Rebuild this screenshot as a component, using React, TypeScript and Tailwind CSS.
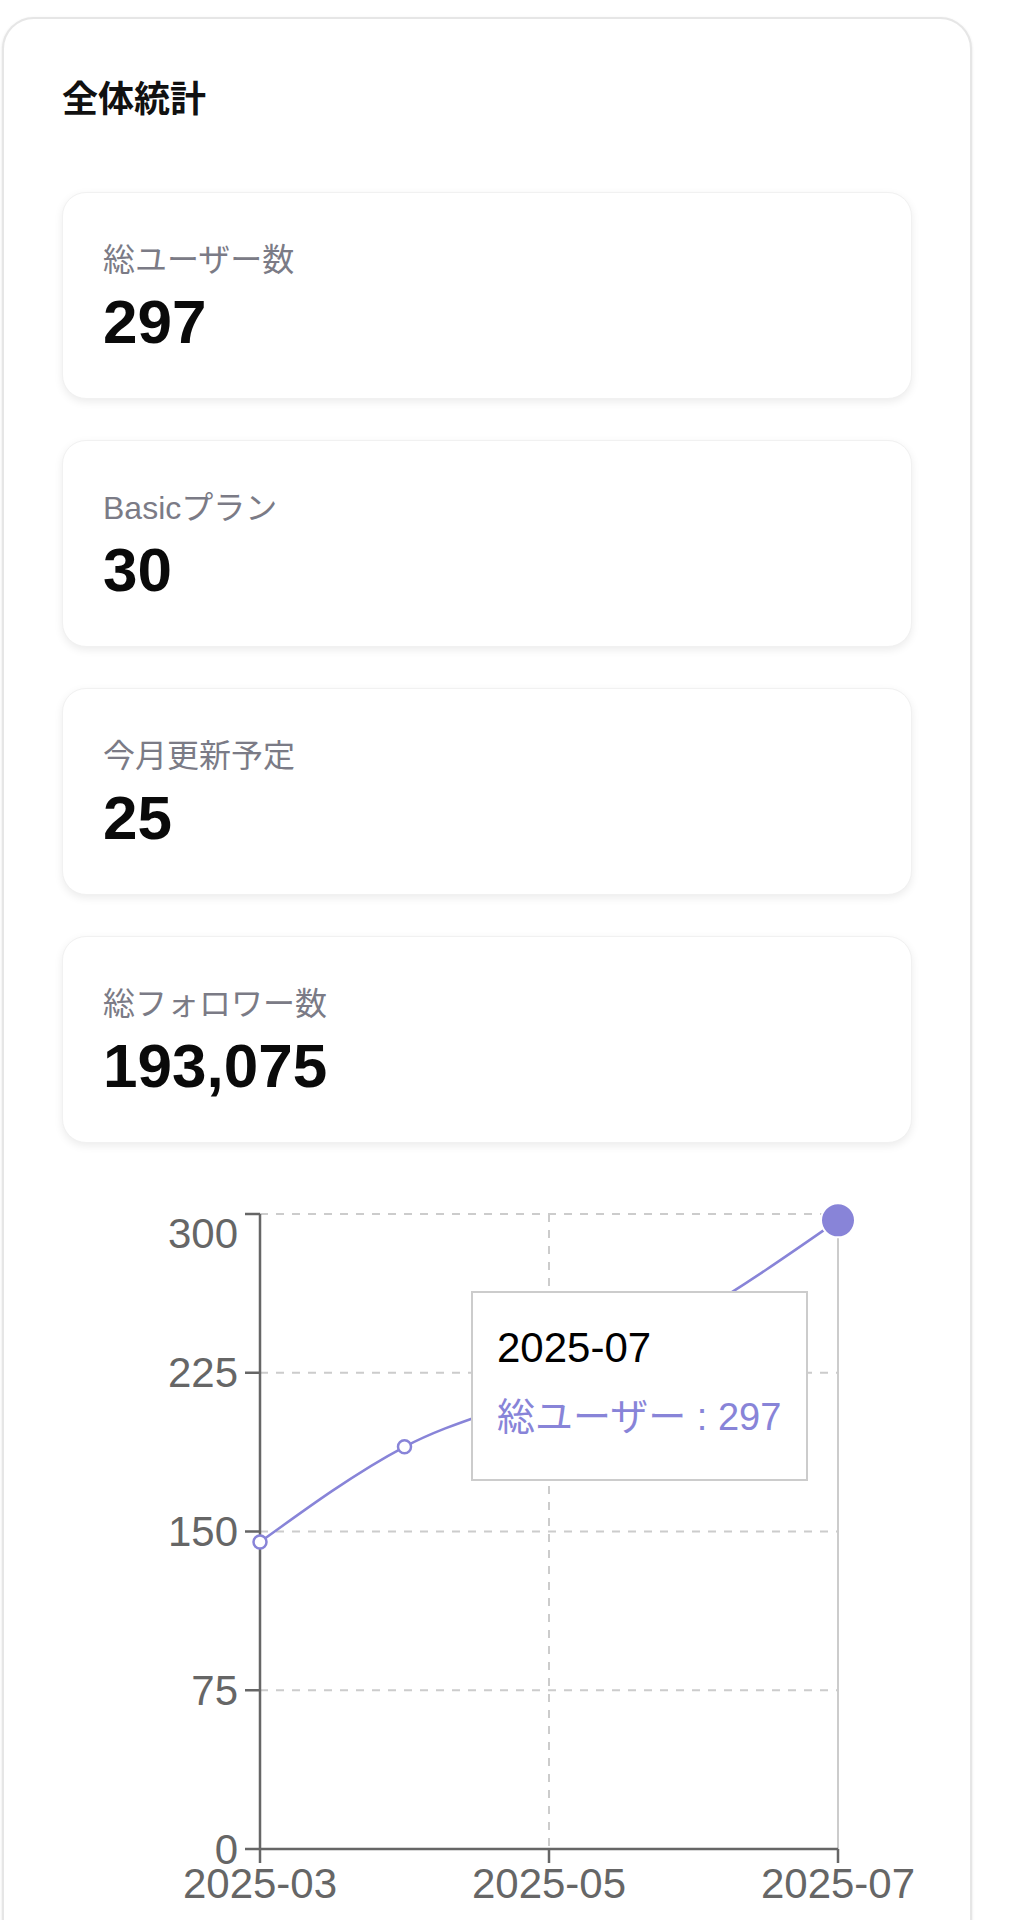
const stats = [
  { label: "総ユーザー数", value: "297" },
  { label: "Basicプラン", value: "30" },
  { label: "今月更新予定", value: "25" },
  { label: "総フォロワー数", value: "193,075" },
];

const data = [
  { month: "2025-03", users: 145 },
  { month: "2025-04", users: 190 },
  { month: "2025-05", users: 217 },
  { month: "2025-06", users: 252 },
  { month: "2025-07", users: 297 },
];

// plot area, in page pixels (svg viewBox is offset to match)
const X0 = 260;
const STEP = 144.5;
const Y0 = 1849;
const YTOP = 1214;
const X_END = X0 + STEP * 4;

const px = (i: number) => X0 + i * STEP;
const py = (v: number) => Y0 - (v * (Y0 - YTOP)) / 300;

// monotone-x curve, same idea as d3 curveMonotoneX
function monotonePath(pts: { x: number; y: number }[]) {
  const n = pts.length;
  const sec: number[] = [];
  for (let i = 0; i < n - 1; i++) {
    sec.push((pts[i + 1].y - pts[i].y) / (pts[i + 1].x - pts[i].x));
  }
  const t: number[] = new Array(n).fill(0);
  for (let i = 1; i < n - 1; i++) {
    const s0 = sec[i - 1];
    const s1 = sec[i];
    const p = (s0 + s1) / 2;
    t[i] = (Math.sign(s0) + Math.sign(s1)) * Math.min(Math.abs(s0), Math.abs(s1), 0.5 * Math.abs(p));
  }
  t[0] = (3 * sec[0] - t[1]) / 2;
  t[n - 1] = (3 * sec[n - 2] - t[n - 2]) / 2;

  let d = `M${pts[0].x},${pts[0].y}`;
  for (let i = 0; i < n - 1; i++) {
    const dx = (pts[i + 1].x - pts[i].x) / 3;
    d += ` C${pts[i].x + dx},${pts[i].y + dx * t[i]} ${pts[i + 1].x - dx},${pts[i + 1].y - dx * t[i + 1]} ${pts[i + 1].x},${pts[i + 1].y}`;
  }
  return d;
}

function StatCard({ label, value }: { label: string; value: string }) {
  return (
    <div className="h-[207px] rounded-[24px] border border-[#f1f1f1] bg-white px-[40px] pt-[43px] shadow-[0_3px_8px_rgba(0,0,0,0.08)]">
      <p className="text-[32px] leading-[48px] text-[#7b7b86]">{label}</p>
      <p className="mt-[2px] text-[62px] font-bold leading-[72px] text-[#0a0a0a]">{value}</p>
    </div>
  );
}

function UsersChart() {
  const pts = data.map((d, i) => ({ x: px(i), y: py(d.users) }));
  const yTicks = [0, 75, 150, 225, 300];
  const xTicks = [0, 2, 4];

  return (
    <div className="relative h-[780px]">
      <svg width="850" height="780" viewBox="62 1184 850 780" className="block overflow-visible">
        {/* grid */}
        {yTicks.filter((v) => v > 0).map((v) => (
          <line key={v} x1={X0} x2={X_END} y1={py(v)} y2={py(v)} stroke="#cccccc" strokeWidth="2" strokeDasharray="8 8" />
        ))}
        {xTicks.map((i) => (
          <line key={i} x1={px(i)} x2={px(i)} y1={YTOP} y2={Y0} stroke="#cccccc" strokeWidth="2" strokeDasharray="8 8" />
        ))}

        {/* cursor */}
        <line x1={X_END} x2={X_END} y1={YTOP} y2={Y0} stroke="#cccccc" strokeWidth="2" />

        {/* y axis */}
        <line x1={X0} x2={X0} y1={YTOP} y2={Y0} stroke="#666666" strokeWidth="2.5" />
        {yTicks.map((v) => (
          <g key={v}>
            <line x1={245} x2={X0} y1={py(v)} y2={py(v)} stroke="#666666" strokeWidth="2.5" />
            <text
              x={238}
              y={v === 300 ? 1233 : py(v)}
              textAnchor="end"
              dominantBaseline="central"
              fontSize="42"
              fill="#666666"
              fontFamily="Liberation Sans, sans-serif"
            >
              {v}
            </text>
          </g>
        ))}

        {/* x axis */}
        <line x1={X0} x2={X_END} y1={Y0} y2={Y0} stroke="#666666" strokeWidth="2.5" />
        {xTicks.map((i) => (
          <g key={i}>
            <line x1={px(i)} x2={px(i)} y1={Y0} y2={1863} stroke="#666666" strokeWidth="2.5" />
            <text
              x={px(i)}
              y={1883}
              textAnchor="middle"
              dominantBaseline="central"
              fontSize="42"
              fill="#666666"
              fontFamily="Liberation Sans, sans-serif"
            >
              {data[i].month}
            </text>
          </g>
        ))}

        {/* line */}
        <path d={monotonePath(pts)} fill="none" stroke="#8884d8" strokeWidth="2.5" />
        {pts.slice(0, 4).map((p, i) => (
          <circle key={i} cx={p.x} cy={p.y} r="6.5" fill="#ffffff" stroke="#8884d8" strokeWidth="2.5" />
        ))}
        <circle cx={pts[4].x} cy={pts[4].y} r="17" fill="#8884d8" stroke="#ffffff" strokeWidth="2" />
      </svg>

      {/* tooltip */}
      <div className="absolute left-[409px] top-[107px] h-[190px] w-[337px] border-2 border-[#cccccc] bg-white pl-[24px] pt-[28px] whitespace-nowrap">
        <p className="text-[42px] leading-[54px] text-black">2025-07</p>
        <p className="pt-[15px] text-[38px] leading-[54px] text-[#8884d8]">総ユーザー : 297</p>
      </div>
    </div>
  );
}

export default function App() {
  return (
    <div className="h-[1920px] overflow-hidden bg-white pl-[2px] pt-[17px] font-['Liberation_Sans','Noto_Sans_CJK_JP',sans-serif]">
      <div className="w-[970px] rounded-[32px] border-2 border-[#e6e6e6] bg-white px-[58px] pb-[58px] pt-[58px] shadow-sm">
        <h2 className="mb-[69px] text-[36px] font-bold leading-[46px] text-[#111111]">全体統計</h2>

        <div className="flex flex-col gap-[41px]">
          {stats.map((s) => (
            <StatCard key={s.label} label={s.label} value={s.value} />
          ))}
          <UsersChart />
        </div>
      </div>
    </div>
  );
}
